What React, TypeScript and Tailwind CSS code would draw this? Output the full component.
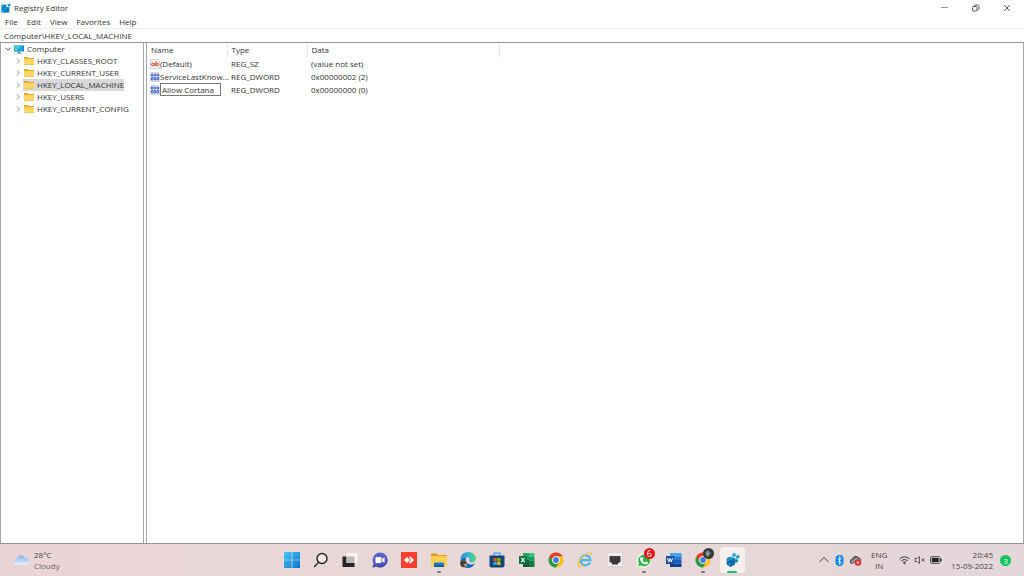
import React from "react";

const treeKeys = [
    "HKEY_CLASSES_ROOT",
    "HKEY_CURRENT_USER",
    "HKEY_LOCAL_MACHINE",
    "HKEY_USERS",
    "HKEY_CURRENT_CONFIG",
];

const values = [
    { name: "(Default)", type: "REG_SZ", data: "(value not set)", kind: "string" },
    { name: "ServiceLastKnow...", type: "REG_DWORD", data: "0x00000002 (2)", kind: "binary" },
    { name: "Allow Cortana", type: "REG_DWORD", data: "0x00000000 (0)", kind: "binary" },
];

function RegistryIcon(props: { className: string }) {
    return (
        <svg viewBox="0 0 24 24" className={props.className}>
            <path d="M1 4h19v19H1z" fill="#0b7fc4" />
            <path d="M1 4h6v6H1zM8 11h5v5H8zM1 17h6v6H1z" fill="#2fb4ea" />
            <path d="M7.500 4v19M13.500 4v19M1 10.500h19M1 16.500h19" stroke="#0a6db0" strokeWidth="1" />
            <path d="M13 3h7v7h-7z" fill="#fff" />
            <path d="M15 5l4.500-4.500L24 5l-4.500 4.500z" fill="#129ddb" />
        </svg>
    );
}

function CubesIcon() {
    return (
        <svg viewBox="0 0 48 48" className="size-4">
            <path d="M8 19l12-5 13 5v18l-13 8-12-7z" fill="#0a72b5" />
            <path d="M8 19l12-5 13 5-13 6z" fill="#2aa5d8" />
            <path d="M20 25v20M8 28l12 7 13-7M14 16l13 6v19" stroke="#07578f" strokeWidth="1.5" fill="none" />
            <path d="M10 22l4 2v4l-4-1zM15 33l4 2v5l-4-2z" fill="#37b9ea" />
            <path d="M25 6l5-3 5 3v6l-5 3-5-3z" fill="#1598d4" />
            <path d="M37 11l4-3 5 3v6l-5 2-4-2z" fill="#0b79b5" />
            <path d="M31 22l5-3 6 3v7l-6 3-5-3z" fill="#0d86c4" />
            <path d="M37 11l4-3 5 3-5 3zM31 22l5-3 6 3-6 3zM25 6l5-3 5 3-5 3z" fill="#45c4ef" />
        </svg>
    );
}

function MonitorIcon() {
    return (
        <svg viewBox="0 0 20 18" className="h-[9px] w-[10px] shrink-0">
            <path d="M0 1h20v12H0z" fill="#0873b5" />
            <path d="M1 2h18v10H1z" fill="#1aa5d8" />
            <path d="M1 2h13L5 12H1z" fill="#43cbe6" />
            <path d="M8 13h4v3h3v1H5v-1h3z" fill="#3a81ac" />
        </svg>
    );
}

function FolderIcon() {
    return (
        <svg viewBox="0 0 20 16" className="h-2 w-[10px] shrink-0">
            <path d="M0 0h7l2 2h11v12H0z" fill="#eba91f" />
            <path d="M0 4h20v12H0z" fill="#ffd766" />
            <path d="M0 15h20v1H0z" fill="#e9b83e" />
        </svg>
    );
}

function ValueIcon(props: { kind: string }) {
    return (
        <svg viewBox="0 0 20 20" className="size-[10px] shrink-0">
            <path d="M1 1h15l3 3v15H1z" fill="#f4f4f6" stroke="#b3b3bb" strokeWidth="1" />
            {props.kind === "string"
                ? <g fill="none" stroke="#d9482b" strokeWidth="2">
                    <circle cx="5.500" cy="11" r="2.6" />
                    <path d="M8.500 8v6M12 4v10" />
                    <circle cx="14.500" cy="11" r="2.5" />
                </g>
                : <g fill="none" stroke="#2b50d0" strokeWidth="1.7">
                    <path d="M3 4h3v4H3zM8.500 4h3v4h-3zM14 4h3v4h-3zM3 11h3v5H3zM8.500 11h3v5h-3zM14 11h3v5h-3z" />
                </g>}
        </svg>
    );
}

function Chevron(props: { open?: boolean }) {
    return (
        <svg viewBox="0 0 12 12" className="size-[6px] shrink-0" fill="none" stroke={props.open ? "#333" : "#888"} strokeWidth="1.8">
            <path d={props.open ? "M1 3.500l5 5 5-5" : "M4 1l5 5-5 5"} />
        </svg>
    );
}

function StartIcon() {
    return (
        <svg viewBox="0 0 32 32" className="size-4">
            <defs>
                <linearGradient id="start" x1="0" y1="0" x2="1" y2="1">
                    <stop offset="0" stopColor="#45c8f7" />
                    <stop offset="1" stopColor="#0873cc" />
                </linearGradient>
            </defs>
            <path d="M0 0h15.300v15.300H0zM16.700 0H32v15.300H16.700zM0 16.700h15.300V32H0zM16.700 16.700H32V32H16.700z" fill="url(#start)" />
        </svg>
    );
}

function SearchIcon() {
    return (
        <svg viewBox="0 0 32 32" className="size-4" fill="none" stroke="#262223" strokeWidth="2.8">
            <circle cx="18" cy="13" r="10" fill="#efe5e5" />
            <path d="M11 21l-8 8" strokeLinecap="round" />
        </svg>
    );
}

function TaskViewIcon() {
    return (
        <svg viewBox="0 0 32 32" className="size-4">
            <path d="M1 9h24v21H1z" fill="#262626" />
            <path d="M9 2h22v20H9z" fill="#f6f3f3" />
            <path d="M9 9h16v13H9z" fill="#bdb9b9" />
        </svg>
    );
}

function ChatIcon() {
    return (
        <svg viewBox="0 0 32 32" className="size-4">
            <path d="M16 1a15 15 0 1 1-7 28l-8 2 2-8A15 15 0 0 1 16 1z" fill="#5b5fc7" />
            <path d="M31 16a15 15 0 0 1-22 13l-8 2 1-5c9 3 20 0 29-10z" fill="#4548ad" />
            <rect x="7" y="10" width="12" height="12" rx="2" fill="#fff" />
            <path d="M20 14l5-4v12l-5-4z" fill="#fff" />
        </svg>
    );
}

function AnyDeskIcon() {
    return (
        <svg viewBox="0 0 32 32" className="size-4">
            <path d="M0 0h32v32H0z" fill="#f9402f" />
            <path d="M12 10l6 6-6 6-6-6z" fill="#fff" />
            <path d="M16 11l3-2 7 7-7 7-3-2 4-5z" fill="#fff" />
        </svg>
    );
}

function ExplorerIcon() {
    return (
        <svg viewBox="0 0 32 32" className="size-4">
            <path d="M0 3h11l3 3h18v10H0z" fill="#e3a01c" />
            <path d="M0 8h32v21H0z" fill="#ffd04f" />
            <path d="M6 29v-6q0-2 2-2h16q2 0 2 2v6z" fill="#1679c5" />
            <path d="M6 27h20v3H6z" fill="#0d5896" />
        </svg>
    );
}

function EdgeIcon() {
    return (
        <svg viewBox="0 0 32 32" className="size-4">
            <defs>
                <linearGradient id="edge" x1="0" y1="0" x2="1" y2="0">
                    <stop offset="0" stopColor="#1b8edb" />
                    <stop offset="0.6" stopColor="#35c1c5" />
                    <stop offset="1" stopColor="#62d66a" />
                </linearGradient>
            </defs>
            <path d="M1 15C1 6 8 0 17 0s15 7 15 13c0 5-4 8-9 8-4 0-6-2-4-5 1-3-2-6-6-6-6 0-11 2-12 5z" fill="url(#edge)" />
            <path d="M13 11c-3 4-2 13 9 14 4 0 6-1 8-2-3 6-9 9-14 9C7 32 1 25 1 16c2-4 7-6 12-5z" fill="#1468b8" />
            <circle cx="7" cy="24" r="7" fill="#b8a082" />
            <path d="M0 23q0-6 7-6 5 0 7 5l-7 3 4 5H4z" fill="#493c35" />
        </svg>
    );
}

function StoreIcon() {
    return (
        <svg viewBox="0 0 32 32" className="size-4">
            <path d="M10 8V2h12v6" fill="none" stroke="#3aa4df" strokeWidth="2.5" />
            <path d="M1 7h30v20q0 4-4 4H5q-4 0-4-4z" fill="#124678" />
            <path d="M9 12h6.500v6.500H9z" fill="#f25022" />
            <path d="M16.500 12H23v6.500h-6.500z" fill="#7fba00" />
            <path d="M9 19.500h6.500V26H9z" fill="#27a9ef" />
            <path d="M16.500 19.500H23V26h-6.500z" fill="#ffb900" />
        </svg>
    );
}

function ExcelIcon() {
    return (
        <svg viewBox="0 0 32 32" className="size-4">
            <path d="M8 2h12v14H8z" fill="#21a366" />
            <path d="M20 2h11v8H20z" fill="#33c481" />
            <path d="M20 10h11v7H20z" fill="#1b9a5b" />
            <path d="M8 16h12v14H8z" fill="#185c37" />
            <path d="M20 17h11v13H20z" fill="#107c41" />
            <path d="M0 8h16v16H0z" fill="#0f6f3b" />
            <path d="M4.500 11.500l7 9M11.500 11.500l-7 9" stroke="#fff" strokeWidth="2.4" />
        </svg>
    );
}

function ChromeIcon() {
    return (
        <svg viewBox="0 0 32 32" className="size-4">
            <circle cx="16" cy="16" r="15" fill="#fbc116" />
            <path d="M3 8.500A15 15 0 0 1 29 8.500H16a7.500 7.500 0 0 0-6.500 11.250z" fill="#e33b2e" />
            <path d="M3 8.500A15 15 0 0 0 16 31l6.500-11.250a7.500 7.500 0 0 1-13 0z" fill="#229a4c" />
            <circle cx="16" cy="16" r="7.500" fill="#fff" />
            <circle cx="16" cy="16" r="5.800" fill="#3a7de8" />
        </svg>
    );
}

function InternetExplorerIcon() {
    return (
        <svg viewBox="0 0 32 32" className="size-4" fill="none">
            <path d="M26 21a10 10 0 1 1 1-5H8" stroke="#48b8ea" strokeWidth="4.500" />
            <path d="M4 29C-3 26 8 8 21 3c6-2 9-1 8 4" stroke="#f2c230" strokeWidth="2.500" />
            <path d="M4 29c3 1 6-1 9-3" stroke="#f2c230" strokeWidth="2.500" />
        </svg>
    );
}

function PortIcon() {
    return (
        <svg viewBox="0 0 32 32" className="size-4">
            <path d="M1 1h30v30H1z" fill="#f0eeee" stroke="#d0caca" />
            <path d="M5 8h22v12l-5 2v3H10v-3l-5-2z" fill="#383838" />
            <path d="M10 8v4M14 8v4M18 8v4M22 8v4" stroke="#666" />
            <path d="M2 28h28v3H2z" fill="#d5d2d2" />
        </svg>
    );
}

function WhatsAppIcon() {
    return (
        <svg viewBox="0 0 32 32" className="size-4">
            <path d="M16 3a14 14 0 1 1-7 26l-8 2 2-8A14 14 0 0 1 16 3z" fill="#fff" />
            <path d="M16 5a12 12 0 1 1-6 22l-6 2 2-6A12 12 0 0 1 16 5z" fill="#2bb741" />
            <path d="M11 10l3 1 1 3-2 2q2 4 5 5l2-2 4 2q0 4-4 4-10-1-12-11 0-3 3-4z" fill="#fff" />
        </svg>
    );
}

function WordIcon() {
    return (
        <svg viewBox="0 0 32 32" className="size-4">
            <path d="M8 2h23v8H8z" fill="#41a5ee" />
            <path d="M8 9h23v7H8z" fill="#2b7cd3" />
            <path d="M8 16h23v7H8z" fill="#185abd" />
            <path d="M8 23h23v7H8z" fill="#103f91" />
            <path d="M0 8h16v16H0z" fill="#1650a8" />
            <path d="M3 12l2.500 8L8 13l2.500 7 2.500-8" fill="none" stroke="#fff" strokeWidth="2" />
        </svg>
    );
}

const apps = [
    { name: "Start", icon: <StartIcon /> },
    { name: "Search", icon: <SearchIcon /> },
    { name: "Task View", icon: <TaskViewIcon /> },
    { name: "Chat", icon: <ChatIcon /> },
    { name: "AnyDesk", icon: <AnyDeskIcon /> },
    { name: "File Explorer", icon: <ExplorerIcon />, running: true },
    { name: "Microsoft Edge", icon: <EdgeIcon /> },
    { name: "Microsoft Store", icon: <StoreIcon /> },
    { name: "Excel", icon: <ExcelIcon /> },
    { name: "Google Chrome", icon: <ChromeIcon /> },
    { name: "Internet Explorer", icon: <InternetExplorerIcon /> },
    { name: "Network", icon: <PortIcon /> },
    { name: "WhatsApp", icon: <WhatsAppIcon />, running: true, badge: 6 },
    { name: "Word", icon: <WordIcon /> },
    { name: "Chrome profile", icon: <ChromeIcon />, running: true, avatar: true },
    { name: "Registry Editor", icon: <CubesIcon />, active: true },
];

function TitleBar() {
    return (
        <div className="flex h-[15px] items-center justify-between">
            <div className="flex items-center gap-[3px] pl-px">
                <RegistryIcon className="size-[10px]" />
                <h1>Registry Editor</h1>
            </div>
            <div className="flex h-full pr-px text-[#555]">
                <button aria-label="Minimize" className="flex w-[31px] items-center justify-center">
                    <svg viewBox="0 0 8 8" className="size-2" fill="none" stroke="#999"><path d="M0 3.500h7" /></svg>
                </button>
                <button aria-label="Restore" className="flex w-[31px] items-center justify-center">
                    <svg viewBox="0 0 16 16" className="size-2" fill="none" stroke="currentColor" strokeWidth="2">
                        <rect x="1" y="5" width="9" height="9" rx="2" />
                        <path d="M4 4q0-2 3-2h4q3 0 3 3v4q0 3-3 3" />
                    </svg>
                </button>
                <button aria-label="Close" className="flex w-8 items-center justify-center">
                    <svg viewBox="0 0 16 16" className="size-2" fill="none" stroke="currentColor" strokeWidth="1.8"><path d="M2 2l12 12M14 2L2 14" /></svg>
                </button>
            </div>
        </div>
    );
}

function KeyTree() {
    const [selected, setSelected] = React.useState("HKEY_LOCAL_MACHINE");

    return (
        <nav aria-label="Registry keys" className="w-36 shrink-0 border-x border-[#a5a5ad]">
            <button className="flex h-3 items-center gap-[3px] pl-1">
                <Chevron open />
                <MonitorIcon />
                <span>Computer</span>
            </button>
            <ul>
                {treeKeys.map((key) => (
                    <li key={key} className="flex h-3 items-center gap-[2px] pl-[14px]">
                        <Chevron />
                        <button
                            onClick={() => setSelected(key)}
                            className={"flex h-3 items-center gap-[3px] pl-px " + (key === selected ? "bg-[#d9d9d9]" : "")}
                        >
                            <FolderIcon />
                            <span>{key}</span>
                        </button>
                    </li>
                ))}
            </ul>
        </nav>
    );
}

function ValueList() {
    const [newName, setNewName] = React.useState("Allow Cortana");

    return (
        <main className="min-w-0 flex-1 border-x border-[#a5a5ad]">
            <table className="w-full table-fixed border-collapse text-left">
                <colgroup>
                    <col className="w-20" />
                    <col className="w-20" />
                    <col className="w-48" />
                    <col />
                </colgroup>
                <thead>
                    <tr className="h-[14px]">
                        <th className="border-r border-[#e5e5e5] p-0 pl-1 font-normal">Name</th>
                        <th className="border-r border-[#e5e5e5] p-0 pl-1 font-normal">Type</th>
                        <th className="border-r border-[#e5e5e5] p-0 pl-1 font-normal">Data</th>
                        <td></td>
                    </tr>
                </thead>
                <tbody>
                    {values.map((value, index) => (
                        <tr key={value.name} className="h-[13px]">
                            <td className="p-0 pl-[3px]">
                                <div className="flex items-center whitespace-nowrap">
                                    <ValueIcon kind={value.kind} />
                                    {index === 2
                                        ? <input
                                            type="text"
                                            aria-label="Value name"
                                            value={newName}
                                            onChange={(e) => setNewName(e.target.value)}
                                            className="h-[13px] w-[61px] border border-[#777] bg-white px-px outline-none"
                                        />
                                        : <span>{value.name}</span>}
                                </div>
                            </td>
                            <td className="p-0 pl-1">{value.type}</td>
                            <td className="p-0 pl-1">{value.data}</td>
                            <td></td>
                        </tr>
                    ))}
                </tbody>
            </table>
        </main>
    );
}

function Tray() {
    return (
        <div className="flex items-center justify-end pr-[13px]">
            <button aria-label="Show hidden icons" className="mr-[6px]">
                <svg viewBox="0 0 20 20" className="size-[10px]" fill="none" stroke="#444" strokeWidth="2"><path d="M1 14l9-9 9 9" /></svg>
            </button>
            <button aria-label="Bluetooth" className="mr-[6px]">
                <svg viewBox="0 0 18 22" className="h-[11px] w-[9px]">
                    <rect x="1" width="16" height="22" rx="8" fill="#0a84f5" />
                    <path d="M5 7l8 8-4 4V3l4 4-8 8" fill="none" stroke="#fff" strokeWidth="1.6" />
                </svg>
            </button>
            <button aria-label="OneDrive" className="mr-[9px]">
                <svg viewBox="0 0 24 22" className="h-[11px] w-3">
                    <path d="M5 17H4a4 4 0 0 1 0-8 8 8 0 0 1 14-3q4 1 4 5" fill="#777" stroke="#444" strokeWidth="2" />
                    <path d="M3 14l10-6 8 2" stroke="#d8cccc" strokeWidth="1.5" fill="none" />
                    <circle cx="16" cy="15" r="6.500" fill="#dc2929" />
                    <path d="M13.500 12.500l5 5M18.500 12.500l-5 5" stroke="#fff" strokeWidth="1.8" />
                </svg>
            </button>
            <button className="mr-3 text-center">
                <span className="block">ENG</span>
                <span className="block">IN</span>
            </button>
            <button aria-label="Network, volume and battery" className="mr-[9px] flex items-center gap-1">
                <svg viewBox="0 0 22 20" className="h-[10px] w-[11px]" fill="none" stroke="#333" strokeWidth="2">
                    <path d="M1 8q10-9 20 0M4.500 11.500q6.500-6 13 0M8 15q3-3 6 0" />
                    <circle cx="11" cy="17" r="1" />
                </svg>
                <svg viewBox="0 0 24 20" className="h-[10px] w-3" fill="none" stroke="#444" strokeWidth="1.700">
                    <path d="M2 7h4l5-4v14l-5-4H2zM15 7l6 6M21 7l-6 6" />
                </svg>
                <svg viewBox="0 0 24 16" className="h-2 w-3">
                    <rect x="1" y="1" width="19" height="14" rx="3" fill="none" stroke="#333" strokeWidth="1.500" />
                    <path d="M4 4h13v8H4zM21 6h2v4h-2z" fill="#222" stroke="#222" />
                </svg>
            </button>
            <button className="mr-[7px] text-right">
                <span className="block">20:45</span>
                <span className="block">15-09-2022</span>
            </button>
            <button aria-label="3 notifications" className="flex size-[11px] items-center justify-center rounded-full bg-[#12c45c] text-[8px] text-white">3</button>
        </div>
    );
}

function Taskbar() {
    return (
        <footer className="grid h-8 grid-cols-[1fr_auto_1fr] bg-linear-to-r from-[#ead5d6] via-[#e8d8d8] to-[#e4d6d9] text-[#444] leading-[11px]">
            <button className="flex items-center gap-1 justify-self-start pl-[13px] text-left">
                <svg viewBox="0 0 34 24" className="h-3 w-[17px]">
                    <defs>
                        <linearGradient id="cloud" x1="0" y1="0" x2="0" y2="1">
                            <stop offset="0" stopColor="#86b1e6" />
                            <stop offset="1" stopColor="#e9f2fc" />
                        </linearGradient>
                    </defs>
                    <path d="M7 22a6 6 0 0 1 0-12A9 9 0 0 1 24 8a7 7 0 0 1 3 14z" fill="url(#cloud)" />
                </svg>
                <span>
                    <span className="block">28°C</span>
                    <span className="block text-[#666]">Cloudy</span>
                </span>
            </button>
            <div className="grid w-[470px] grid-cols-16">
                {apps.map((app) => (
                    <button key={app.name} aria-label={app.name} className="relative flex items-center justify-center">
                        <span className={"flex h-[26px] w-[25px] items-center justify-center rounded-sm " + (app.active ? "bg-[#f5efed]" : "")}>
                            {app.icon}
                        </span>
                        {app.badge && <span className="absolute top-1 right-1 flex size-[11px] items-center justify-center rounded-full bg-[#e81218] text-[9px] text-white">{app.badge}</span>}
                        {app.avatar && (
                            <svg viewBox="0 0 22 22" className="absolute top-1 right-1 size-[11px]">
                                <circle cx="11" cy="11" r="11" fill="#34383b" />
                                <path d="M5 9l5-5 3 5 4 1-5 4-2 5-4-5z" fill="#8c938e" />
                            </svg>
                        )}
                        {app.running && <span className="absolute bottom-[3px] h-[2px] w-1 rounded-full bg-[#777]"></span>}
                        {app.active && <span className="absolute bottom-[3px] h-[2px] w-[10px] rounded-full bg-[#1ec46c]"></span>}
                    </button>
                ))}
            </div>
            <Tray />
        </footer>
    );
}

function App() {
    return (
        <div className="flex min-h-screen flex-col bg-white font-['Open_Sans','Noto_Sans',sans-serif] text-[8px] leading-3 text-[#333]">
            <TitleBar />
            <div role="menubar" className="flex h-[14px] items-center gap-[9px] border-b border-[#ececec] px-[5px]">
                <button role="menuitem">File</button>
                <button role="menuitem">Edit</button>
                <button role="menuitem">View</button>
                <button role="menuitem">Favorites</button>
                <button role="menuitem">Help</button>
            </div>
            <input
                type="text"
                aria-label="Address"
                defaultValue="Computer\HKEY_LOCAL_MACHINE"
                className="h-[13px] w-full px-1 outline-none"
            />
            <div className="flex flex-1 gap-[2px] border-y border-[#96969c]">
                <KeyTree />
                <ValueList />
            </div>
            <Taskbar />
        </div>
    );
}

export default App;
